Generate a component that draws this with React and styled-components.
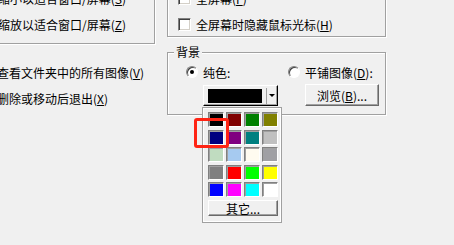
import React from 'react';
import styled, { createGlobalStyle } from 'styled-components';

const GlobalStyle = createGlobalStyle`
  html, body {
    margin: 0;
    padding: 0;
    background: #f0f0f0;
  }
  body {
    font-family: "Noto Sans CJK SC", "DejaVu Sans", sans-serif;
    font-size: 12px;
    color: #000;
  }
`;

const Page = styled.div`
  position: relative;
  width: 454px;
  height: 245px;
  overflow: hidden;
  background: #f0f0f0;
  display: flex;
  align-items: flex-start;
  gap: 12px;
`;

const LeftColumn = styled.div`
  width: 165px;
  flex: none;
  margin-left: -10px;
  display: flex;
  flex-direction: column;
`;

const GroupBox = styled.div`
  box-sizing: border-box;
  margin-top: ${(p) => p.top || 0}px;
  height: ${(p) => p.height}px;
  padding: ${(p) => p.padTop || 0}px 0 0 ${(p) => p.padLeft || 0}px;
  border: 1px solid #a0a0a0;
  box-shadow: inset 1px 1px 0 #fff, 1px 1px 0 #fff;
`;

const Line = styled.div`
  height: 26px;
  line-height: 26px;
  white-space: nowrap;
`;

const CheckLine = styled.div`
  height: 26px;
  display: flex;
  align-items: center;
  gap: 5px;
  white-space: nowrap;
`;

const Key = styled.span`
  text-decoration: underline;
`;

const LooseList = styled.div`
  margin-top: 16px;
  padding-left: 7px;
`;

const RightColumn = styled.div`
  width: 219px;
  flex: none;
  display: flex;
  flex-direction: column;
`;

const CheckBox = styled.span`
  box-sizing: border-box;
  width: 13px;
  height: 13px;
  background: #fff;
  border: 1px solid #808080;
  border-right-color: #fff;
  border-bottom-color: #fff;
  box-shadow: inset 1px 1px 0 #404040, inset -1px -1px 0 #d4d0c8;
  flex: none;
`;

const Fieldset = styled.fieldset`
  box-sizing: border-box;
  margin: 8px 0 0;
  padding: 0;
  height: 70px;
  min-width: 0;
  border: 1px solid #a0a0a0;
  box-shadow: inset 1px 1px 0 #fff, 1px 1px 0 #fff;
  display: flex;
`;

const Legend = styled.legend`
  margin-left: 6px;
  padding: 0 2px;
  line-height: 14px;
  background: #f0f0f0;
`;

const Options = styled.div`
  display: flex;
  padding: 5px 0 0 18px;
`;

const OptionCol = styled.div`
  width: ${(p) => p.width}px;
  flex: none;
  display: flex;
  flex-direction: column;
`;

const RadioRow = styled.div`
  display: flex;
  align-items: center;
  gap: 5px;
  height: 16px;
  white-space: nowrap;
`;

const Radio = styled.span`
  box-sizing: border-box;
  width: 12px;
  height: 12px;
  border-radius: 50%;
  background: #fff;
  border: 1px solid #808080;
  border-right-color: #fff;
  border-bottom-color: #fff;
  box-shadow: inset 1px 1px 0 #404040;
  display: flex;
  align-items: center;
  justify-content: center;
  flex: none;
  &::after {
    content: '';
    width: 4px;
    height: 4px;
    border-radius: 50%;
    background: ${(p) => (p.checked ? '#000' : 'transparent')};
  }
`;

const ComboWrap = styled.div`
  position: relative;
  margin: 5px 0 0 17px;
  width: 75px;
  height: 21px;
`;

const Combo = styled.div`
  box-sizing: border-box;
  width: 100%;
  height: 100%;
  display: flex;
  align-items: center;
  padding: 2px 2px 2px 4px;
  border: 1px solid #fff;
  border-right-color: #000;
  border-bottom-color: #000;
  box-shadow: inset -1px -1px 0 #a0a0a0;
`;

const ColorFill = styled.div`
  width: 55px;
  height: 14px;
  background: ${(p) => p.color};
`;

const ComboArrow = styled.div`
  margin-left: 4px;
  padding-left: 2px;
  height: 16px;
  border-left: 1px solid #a0a0a0;
  display: flex;
  align-items: center;
  &::after {
    content: '';
    border-left: 3px solid transparent;
    border-right: 3px solid transparent;
    border-top: 3px solid #000;
  }
`;

const Button = styled.div`
  box-sizing: border-box;
  width: ${(p) => p.width}px;
  height: ${(p) => p.height}px;
  margin: ${(p) => p.margin || '0'};
  display: flex;
  align-items: center;
  justify-content: center;
  white-space: nowrap;
  background: #f0f0f0;
  border: 1px solid #fff;
  border-right-color: #696969;
  border-bottom-color: #696969;
  box-shadow: inset -1px -1px 0 #a0a0a0;
`;

const Popup = styled.div`
  position: absolute;
  left: -1px;
  top: 22px;
  box-sizing: border-box;
  width: 80px;
  height: 116px;
  padding: 4px;
  background: #f0f0f0;
  border: 1px solid #a0a0a0;
  box-shadow: inset 1px 1px 0 #fff, inset -1px -1px 0 #fff;
  display: flex;
  flex-direction: column;
  z-index: 2;
`;

const Swatches = styled.div`
  display: grid;
  grid-template-columns: repeat(4, 16px);
  grid-auto-rows: 15px;
  column-gap: 2px;
  row-gap: 2.5px;
  margin-left: 1px;
`;

const Swatch = styled.div`
  box-sizing: border-box;
  background: ${(p) => p.color};
  border: 1px solid #808080;
  border-right-color: #fff;
  border-bottom-color: #fff;
  box-shadow: inset 1px 1px 0 #a0a0a0;
`;

const Highlight = styled.div`
  position: absolute;
  left: 194px;
  top: 118px;
  width: 35px;
  height: 30px;
  box-sizing: border-box;
  border: 3px solid #ff2414;
  border-radius: 3px;
  z-index: 3;
`;

const colors = [
  '#000000', '#800000', '#008000', '#808000',
  '#000080', '#800080', '#008080', '#c0c0c0',
  '#c0dcc0', '#a6caf0', '#fffbf0', '#a0a0a4',
  '#808080', '#ff0000', '#00ff00', '#ffff00',
  '#0000ff', '#ff00ff', '#00ffff', '#ffffff',
];

const App = () => {
  return (
    <>
      <GlobalStyle />
      <Page>
        <LeftColumn>
          <GroupBox top={-20} height={64} padTop={5} padLeft={7}>
            <Line>缩小以适合窗口/屏幕(<Key>S</Key>)</Line>
            <Line>缩放以适合窗口/屏幕(<Key>Z</Key>)</Line>
          </GroupBox>
          <LooseList>
            <Line>查看文件夹中的所有图像(<Key>V</Key>)</Line>
            <Line>删除或移动后退出(<Key>X</Key>)</Line>
          </LooseList>
        </LeftColumn>

        <RightColumn>
          <GroupBox top={-20} height={57} padTop={4} padLeft={10}>
            <CheckLine>
              <CheckBox />
              <span>全屏幕(<Key>F</Key>)</span>
            </CheckLine>
            <CheckLine>
              <CheckBox />
              <span>全屏幕时隐藏鼠标光标(<Key>H</Key>)</span>
            </CheckLine>
          </GroupBox>

          <Fieldset>
            <Legend>背景</Legend>
            <Options>
              <OptionCol width={102}>
                <RadioRow>
                  <Radio checked />
                  <span>纯色:</span>
                </RadioRow>
                <ComboWrap>
                  <Combo>
                    <ColorFill color="#000" />
                    <ComboArrow />
                  </Combo>
                  <Popup>
                    <Swatches>
                      {colors.map((c) => (
                        <Swatch key={c} color={c} />
                      ))}
                    </Swatches>
                    <Button width={70} height={16} margin="3px 0 0 1px">其它...</Button>
                  </Popup>
                </ComboWrap>
              </OptionCol>
              <OptionCol width={95}>
                <RadioRow>
                  <Radio />
                  <span>平铺图像(<Key>D</Key>):</span>
                </RadioRow>
                <Button width={74} height={22} margin="4px 0 0 17px">
                  <span>浏览(<Key>B</Key>)...</span>
                </Button>
              </OptionCol>
            </Options>
          </Fieldset>
        </RightColumn>
        <Highlight />
      </Page>
    </>
  );
};

export default App;
